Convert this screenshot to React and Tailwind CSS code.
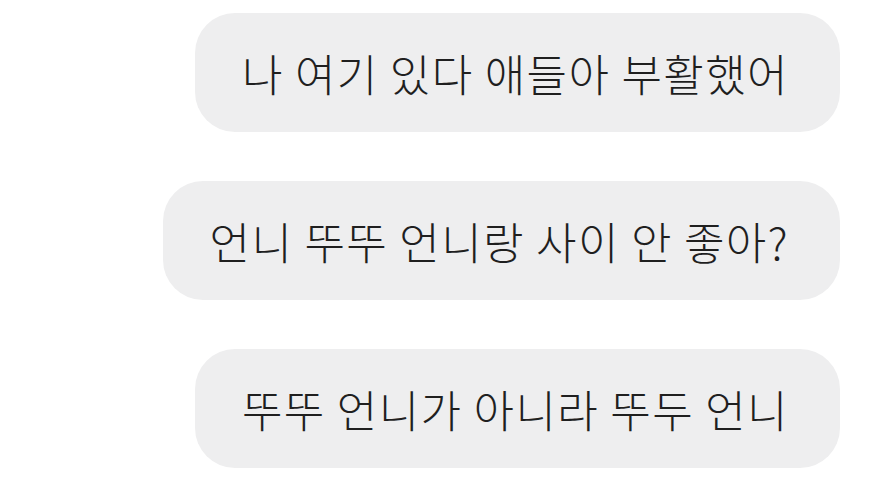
export default function App() {
  const messages = [
    "나 여기 있다 애들아 부활했어",
    "언니 뚜뚜 언니랑 사이 안 좋아?",
    "뚜뚜 언니가 아니라 뚜두 언니",
  ];
  return (
    <div className="w-[871px] h-[491px] bg-white flex flex-col items-end gap-[49px] pt-[13px] pr-[31px] overflow-hidden">
      {messages.map((m) => (
        <div
          key={m}
          className="h-[119px] flex items-center pl-[47px] pr-[51px] rounded-[40px] bg-[#eeeeef] text-[#1f1f1f] text-[44px] font-light tracking-[1.4px] leading-none whitespace-nowrap"
          style={{ fontFamily: '"Noto Sans CJK KR", "Noto Sans", sans-serif' }}
        >
          {m}
        </div>
      ))}
    </div>
  );
}
